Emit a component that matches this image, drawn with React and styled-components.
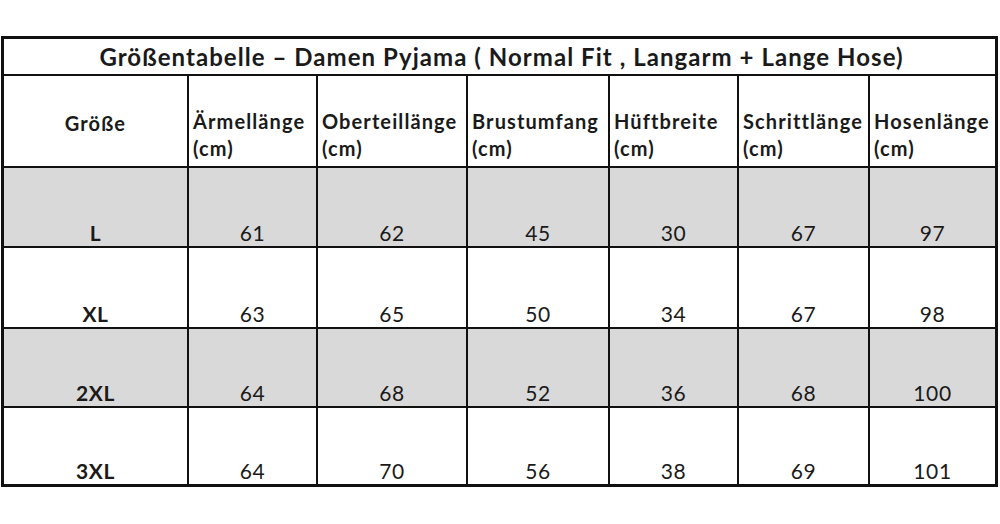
import styled, { createGlobalStyle } from "styled-components";

const GlobalStyle = createGlobalStyle`
  body {
    margin: 0;
    background: #fff;
    font-family: Lato, "Liberation Sans", sans-serif;
    color: #1a1a1a;
  }
`;

const Page = styled.div`
  width: 1000px;
  height: 524px;
  padding: 36px 0 0 1px;
  box-sizing: border-box;
`;

const Table = styled.div`
  display: grid;
  grid-template-columns: 183px 127px 148px 140px 127px 129px 125px;
  grid-template-rows: 35px 90px 78px 79px 77px 76px;
  gap: 2px;
  width: 997px;
  box-sizing: border-box;
  border: 3px solid #111;
  background: #111;
`;

const Title = styled.div`
  grid-column: 1 / -1;
  background: #fff;
  display: flex;
  align-items: center;
  justify-content: center;
  padding-left: 4px;
  font-weight: 700;
  font-size: 24px;
  letter-spacing: 1.05px;
`;

const HeadCell = styled.div`
  background: #fff;
  display: flex;
  flex-direction: column;
  justify-content: ${(p) => (p.center ? "center" : "flex-end")};
  align-items: ${(p) => (p.center ? "center" : "flex-start")};
  padding: ${(p) => (p.center ? "4px 0 0" : "0 0 4px 4px")};
  font-weight: 700;
  font-size: 20px;
  letter-spacing: 1.1px;
  line-height: 27px;
  white-space: nowrap;
`;

const Cell = styled.div`
  background: ${(p) => (p.shaded ? "#d9d9d9" : "#fff")};
  display: flex;
  align-items: flex-end;
  justify-content: center;
  padding-bottom: 1px;
  font-size: 21px;
  letter-spacing: 0.6px;
  font-weight: ${(p) => (p.bold ? 700 : 400)};
`;

const headers = [
  "Ärmellänge",
  "Oberteillänge",
  "Brustumfang",
  "Hüftbreite",
  "Schrittlänge",
  "Hosenlänge",
];

const rows = [
  ["L", 61, 62, 45, 30, 67, 97],
  ["XL", 63, 65, 50, 34, 67, 98],
  ["2XL", 64, 68, 52, 36, 68, 100],
  ["3XL", 64, 70, 56, 38, 69, 101],
];

export default function App() {
  return (
    <Page>
      <GlobalStyle />
      <Table>
        <Title>
          Größentabelle – Damen Pyjama ( Normal Fit , Langarm + Lange Hose)
        </Title>
        <HeadCell center>Größe</HeadCell>
        {headers.map((h) => (
          <HeadCell key={h}>
            <span>{h}</span>
            <span>(cm)</span>
          </HeadCell>
        ))}
        {rows.map((row, i) =>
          row.map((v, j) => (
            <Cell key={`${i}-${j}`} shaded={i % 2 === 0} bold={j === 0}>
              {v}
            </Cell>
          ))
        )}
      </Table>
    </Page>
  );
}
